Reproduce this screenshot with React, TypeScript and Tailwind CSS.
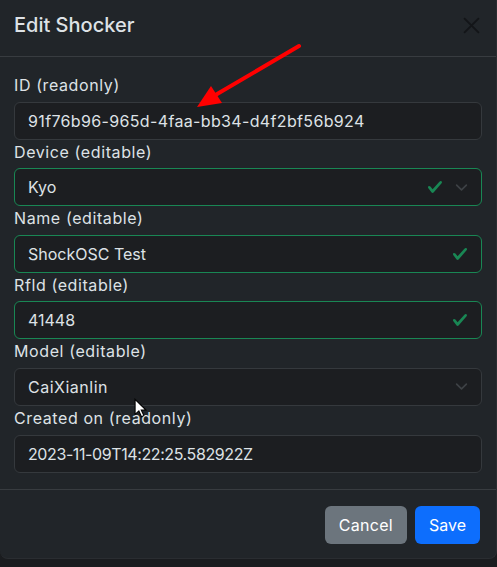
import React from "react"

function Check() {
  return (
    <svg width="16" height="16" viewBox="0 0 8 8" className="shrink-0">
      <path
        fill="#198754"
        d="M2.3 6.73.6 4.53c-.4-1.04.46-1.4 1.1-.8l1.1 1.4 3.4-3.8c.6-.63 1.6-.27 1.2.7l-4 4.6c-.43.5-.8.4-1.1.1z"
      />
    </svg>
  )
}

function Chevron() {
  return (
    <svg width="13" height="13" viewBox="0 0 16 16" className="shrink-0">
      <path d="m2 5 6 6 6-6" fill="none" stroke="#3e4246" strokeWidth="2" strokeLinecap="round" strokeLinejoin="round" />
    </svg>
  )
}

type Field = {
  label: string
  value: string
  valid?: boolean
  select?: boolean
  track?: string
}

const fields: Field[] = [
  { label: "ID (readonly)", value: "91f76b96-965d-4faa-bb34-d4f2bf56b924", track: "tracking-[0.35px]" },
  { label: "Device (editable)", value: "Kyo", valid: true, select: true },
  { label: "Name (editable)", value: "ShockOSC Test", valid: true },
  { label: "Rfld (editable)", value: "41448", valid: true },
  { label: "Model (editable)", value: "CaiXianlin", select: true, track: "tracking-[0.5px]" },
  { label: "Created on (readonly)", value: "2023-11-09T14:22:25.582922Z", track: "tracking-[-0.4px]" },
]

export default function App() {
  return (
    <div className="min-h-[567px] bg-[#1a1c1f] font-['Inter',sans-serif] text-[#dee2e6]">
      <div className="relative w-[497px] bg-[#212529] rounded-b-lg border-b border-r border-[#2a2d31]">
        <div className="h-[57px] flex items-center justify-between pl-[14px] pr-[16px] border-b border-[#383c40]">
          <h5 className="text-[20px] font-medium pb-[6px]">Edit Shocker</h5>
          <svg width="17" height="17" viewBox="0 0 16 16" className="mb-[6px]">
            <path d="M1 1l14 14M15 1 1 15" stroke="#131518" strokeWidth="1.8" />
          </svg>
        </div>

        <div className="px-[14px] pt-[16px] pb-[16px]">
          {fields.map((f) => (
            <div key={f.label}>
              <label className="block text-[16px] leading-[24px] mb-[4.6px] tracking-[0.6px]">{f.label}</label>
              <div
                className={`h-[38px] flex items-center gap-[12px] rounded-md border bg-[#1c1e21] pl-[13px] pr-[13px] ${
                  f.valid ? "border-[#198754]" : "border-[#35393d]"
                }`}
              >
                <span className={`flex-1 text-[16px] leading-[24px] ${f.track ?? ""}`}>{f.value}</span>
                {f.valid && <Check />}
                {f.select && <Chevron />}
              </div>
            </div>
          ))}
        </div>

        <div className="flex justify-end gap-2 px-4 pt-[16px] pb-[14px] border-t border-[#383c40]">
          <button className="h-[38px] px-[14px] rounded-md bg-[#6c757d] text-white text-[16px] tracking-[0.3px]">
            Cancel
          </button>
          <button className="h-[38px] px-[14px] rounded-md bg-[#0d6efd] text-white text-[16px]">Save</button>
        </div>

        {/* annotation arrow */}
        <svg className="absolute left-0 top-0 pointer-events-none" width="497" height="140">
          <line x1="299" y1="46" x2="212" y2="97" stroke="#f00" strokeWidth="4" strokeLinecap="round" />
          <polygon points="197,107 211,86 222,103" fill="#f00" />
        </svg>

        {/* mouse cursor */}
        <svg className="absolute left-[134px] top-[398px] pointer-events-none" width="13" height="20" viewBox="0 0 12 18">
          <path d="M1 1v14l3.5-3.3 2.4 5.3 2.2-1-2.4-5.1H11z" fill="#fff" stroke="#000" strokeWidth="1" />
        </svg>
      </div>
    </div>
  )
}
